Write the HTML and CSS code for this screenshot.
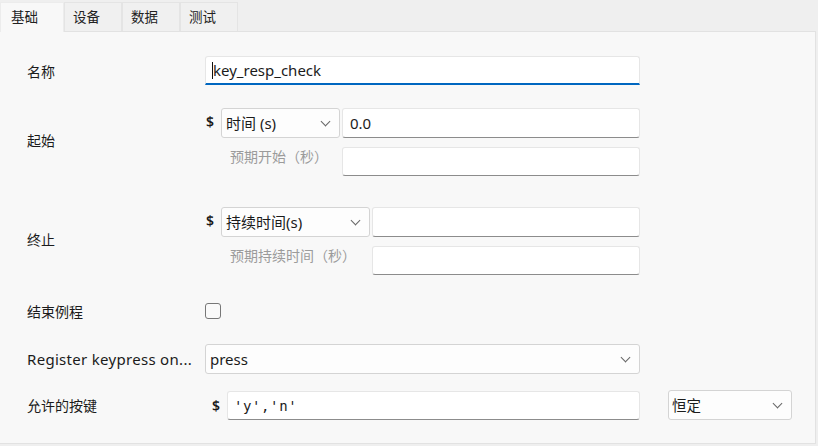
FILE: index.html
```html
<!DOCTYPE html>
<html lang="zh-CN">
<head>
  <meta charset="UTF-8">
  <title>key_resp_check</title>
  <link rel="stylesheet" href="styles.css">
</head>
<body>
  <div class="tabs">
    <div class="tab active">基础</div>
    <div class="tab">设备</div>
    <div class="tab">数据</div>
    <div class="tab">测试</div>
  </div>

  <div class="panel">
    <div class="row row-name">
      <div class="label">名称</div>
      <div class="field">
        <div class="input input-focus w-full"><span class="caret"></span>key_resp_check</div>
      </div>
    </div>

    <div class="row row-block row-start">
      <div class="label">起始</div>
      <div class="field stack">
        <div class="line">
          <span class="dollar">$</span>
          <div class="select sel-start">时间 (s)<span class="chev"></span></div>
          <div class="input grow">0.0</div>
        </div>
        <div class="line">
          <span class="hint hint-start">预期开始（秒）</span>
          <div class="input grow short"></div>
        </div>
      </div>
    </div>

    <div class="row row-block row-stop">
      <div class="label">终止</div>
      <div class="field stack">
        <div class="line">
          <span class="dollar">$</span>
          <div class="select sel-stop">持续时间(s)<span class="chev"></span></div>
          <div class="input grow"></div>
        </div>
        <div class="line">
          <span class="hint hint-stop">预期持续时间（秒）</span>
          <div class="input grow short"></div>
        </div>
      </div>
    </div>

    <div class="row row-check">
      <div class="label">结束例程</div>
      <div class="field">
        <span class="checkbox"></span>
      </div>
    </div>

    <div class="row row-press">
      <div class="label label-latin">Register keypress on...</div>
      <div class="field">
        <div class="select w-full">press<span class="chev"></span></div>
      </div>
    </div>

    <div class="row row-keys">
      <div class="label">允许的按键</div>
      <div class="field field-wide">
        <span class="dollar dollar-keys">$</span>
        <div class="input mono keys">'y','n'</div>
        <div class="select sel-const">恒定<span class="chev"></span></div>
      </div>
    </div>
  </div>
</body>
</html>
```

FILE: styles.css
```css
:root {
  --bar-bg: #efefef;
  --panel-bg: #f8f8f8;
  --line: #e2e2e2;
  --text: #1b1b1b;
  --hint: #9b9b9b;
  --accent: #0067c0;
}

* {
  box-sizing: border-box;
  margin: 0;
  padding: 0;
}

body {
  font-family: "Noto Sans", "Noto Sans CJK SC", sans-serif;
  font-size: 14px;
  color: var(--text);
  background: var(--bar-bg);
  width: 818px;
  height: 446px;
  overflow: hidden;
}

/* tabs */
.tabs {
  display: flex;
  height: 31px;
  align-items: flex-end;
}

.tab {
  height: 29px;
  width: 58px;
  padding-left: 8px;
  line-height: 26px;
  font-family: "Noto Sans CJK SC", sans-serif;
  font-size: 13.5px;
  border: 1px solid #e4e4e4;
  border-bottom: none;
  background: #f0f0f0;
  color: #222;
}

.tab.active {
  width: 64px;
  height: 30px;
  padding-left: 10px;
  background: var(--panel-bg);
  border-color: #ececec;
  position: relative;
  top: 1px;
}

/* panel */
.panel {
  width: 816px;
  height: 413px;
  background: var(--panel-bg);
  border: 1px solid var(--line);
  border-left: none;
  padding-top: 24px;
}

.row {
  display: flex;
  align-items: center;
}

.label {
  width: 205px;
  padding-left: 27px;
  flex-shrink: 0;
  font-family: "Noto Sans", "Noto Sans CJK SC", sans-serif;
  font-size: 14px;
  white-space: nowrap;
}

.label-latin {
  font-size: 15px;
  letter-spacing: 0.3px;
}

.field {
  display: flex;
  align-items: center;
  width: 435px;
}

.field-wide { width: auto; }

.stack {
  flex-direction: column;
  align-items: stretch;
  gap: 9px;
}

.line {
  display: flex;
  align-items: center;
}

.row-name { height: 29px; }
.row-start { margin-top: 23px; }
.row-stop { margin-top: 31px; }
.row-check { margin-top: 27px; height: 18px; }
.row-press { margin-top: 24px; }
.row-keys { margin-top: 16px; }

.row-start .label,
.row-stop .label { padding-bottom: 4px; }

/* controls */
.input {
  height: 30px;
  background: #fff;
  border: 1px solid #e6e6e6;
  border-bottom-color: #8c8c8c;
  border-radius: 3px;
  padding: 0 7px;
  line-height: 28px;
  font-size: 15px;
  white-space: nowrap;
}

.input.short { height: 29px; }

.input-focus {
  height: 29px;
  border-bottom: 2px solid var(--accent);
  border-radius: 3px 3px 0 0;
  padding-left: 6px;
  display: flex;
  align-items: center;
  line-height: 1;
}

.caret {
  display: inline-block;
  width: 1px;
  height: 17px;
  background: #111;
}

.w-full { width: 100%; }
.grow { flex: 1; margin-left: 2px; }

.dollar {
  width: 16px;
  padding-left: 1px;
  font-weight: 600;
  font-size: 14px;
  align-self: flex-start;
  margin-top: 4px;
}

.dollar-keys {
  width: 22px;
  padding-left: 7px;
  align-self: center;
  margin-top: 0;
}

.select {
  position: relative;
  height: 30px;
  background: #fdfdfd;
  border: 1px solid #d4d4d4;
  border-radius: 3px;
  padding: 0 28px 0 4px;
  line-height: 28px;
  font-size: 15px;
  white-space: nowrap;
}

.sel-start { width: 119px; }
.sel-stop { width: 149px; }

.sel-const {
  width: 124px;
  margin-left: 28px;
  padding-left: 3px;
  font-family: "Noto Sans CJK SC", sans-serif;
  font-size: 14.5px;
}

.chev {
  position: absolute;
  right: 10px;
  top: 9px;
  width: 7px;
  height: 7px;
  border-right: 1.2px solid #666;
  border-bottom: 1.2px solid #666;
  transform: rotate(45deg);
}

.hint {
  color: var(--hint);
  padding-left: 25px;
  font-size: 14px;
  line-height: 20px;
  white-space: nowrap;
  align-self: flex-start;
}

.hint-start { width: 135px; }
.hint-stop { width: 165px; }

.checkbox {
  display: inline-block;
  width: 16px;
  height: 16px;
  border: 1px solid #777;
  border-radius: 3px;
  background: #fafafa;
}

.keys {
  width: 413px;
  height: 29px;
}

.mono {
  font-family: "DejaVu Sans Mono", monospace;
  font-size: 14px;
  letter-spacing: 0.6px;
  padding-left: 6px;
}
```
